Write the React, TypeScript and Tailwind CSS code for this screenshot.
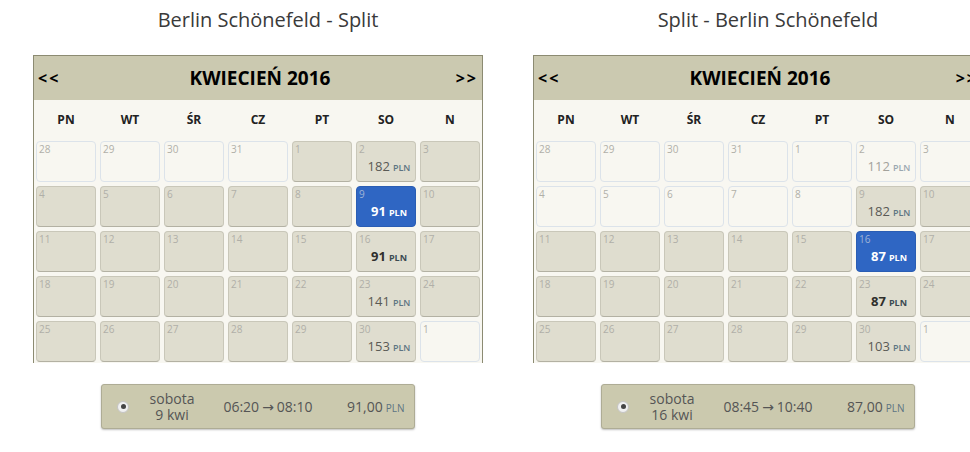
import React from "react";

type Kind = "off" | "day" | "sel";

interface Cell {
  d: number;
  kind: Kind;
  price?: number;
  best?: boolean;
  faded?: boolean;
}

interface Trip {
  title: string;
  cells: Cell[];
  weekday: string;
  date: string;
  from: string;
  to: string;
  amount: string;
}

const WEEKDAYS = ["PN", "WT", "ŚR", "CZ", "PT", "SO", "N"];

// builds a 5-week grid: March tail, April days, May 1st
function month(kinds: (d: number) => Kind, prices: Record<number, Partial<Cell>>): Cell[] {
  const out: Cell[] = [28, 29, 30, 31].map((d) => ({ d, kind: "off" as Kind }));
  for (let d = 1; d <= 30; d++) out.push({ d, kind: kinds(d), ...prices[d] });
  out.push({ d: 1, kind: "off" });
  return out;
}

const TRIPS: Trip[] = [
  {
    title: "Berlin Schönefeld - Split",
    cells: month(
      (d) => (d === 9 ? "sel" : "day"),
      { 2: { price: 182 }, 9: { price: 91, best: true }, 16: { price: 91, best: true }, 23: { price: 141 }, 30: { price: 153 } }
    ),
    weekday: "sobota",
    date: "9 kwi",
    from: "06:20",
    to: "08:10",
    amount: "91,00",
  },
  {
    title: "Split - Berlin Schönefeld",
    cells: month(
      (d) => (d === 16 ? "sel" : d <= 8 ? "off" : "day"),
      { 2: { price: 112, faded: true }, 9: { price: 182 }, 16: { price: 87, best: true }, 23: { price: 87, best: true }, 30: { price: 103 } }
    ),
    weekday: "sobota",
    date: "16 kwi",
    from: "08:45",
    to: "10:40",
    amount: "87,00",
  },
];

function DayCell({ c }: { c: Cell }) {
  const box =
    c.kind === "sel"
      ? "bg-[#2f66c3] border-[#2a5db3]"
      : c.kind === "day"
      ? "bg-[#dfddcf] border-[#c9c7b9] border-b-[#b3b1a3]"
      : "bg-[#f8f7f1] border-[#dce3ea]";
  const num = c.kind === "sel" ? "text-[#9fb3d6]" : "text-[#b0afa8]";
  let priceCls = "text-[#5a5a55] font-normal";
  let plnCls = "text-[#5d7482] font-semibold";
  if (c.faded) {
    priceCls = "text-[#a3a29c] font-normal";
    plnCls = "text-[#9aa7b0] font-semibold";
  }
  if (c.best) {
    priceCls = "text-[#2f2f2c] font-bold";
    plnCls = "text-[#3d4a52] font-bold";
  }
  if (c.kind === "sel") {
    priceCls = "text-white font-bold";
    plnCls = "text-white font-bold";
  }
  return (
    <div className={`h-[41px] rounded-[4px] border ${box} flex flex-col`}>
      <div className={`pl-[2px] pt-[1px] text-[10px] leading-[12px] ${num}`}>{c.d}</div>
      {c.price !== undefined && (
        <div className="text-center pl-[6px] leading-[18px] mt-[1px]">
          <span className={`text-[13px] ${priceCls}`}>{c.price}</span>
          <span className={`text-[9px] ml-[3px] ${plnCls}`}>PLN</span>
        </div>
      )}
    </div>
  );
}

function Calendar({ trip }: { trip: Trip }) {
  return (
    <div className="w-[500px] shrink-0 flex flex-col items-center">
      <div className="pt-[8px] pl-[20px] text-[20px] leading-[24px] text-[#3a3a3a]">{trip.title}</div>

      <div className="mt-[23px] w-[450px] h-[308px] overflow-hidden border border-b-0 border-[#8c8b72] bg-[#f8f7f1]">
        <div className="h-[44px] bg-[#cbc9b0] flex items-center justify-between px-[4px] text-black font-bold">
          <span className="text-[16px] tracking-[2px]">&lt;&lt;</span>
          <span className="text-[19px] pl-[4px]">KWIECIEŃ 2016</span>
          <span className="text-[16px] tracking-[2px]">&gt;&gt;</span>
        </div>
        <div className="grid grid-cols-7 gap-[4px] px-[2px] h-[40px] items-center">
          {WEEKDAYS.map((w) => (
            <div key={w} className="text-center text-[12px] font-bold text-[#222]">
              {w}
            </div>
          ))}
        </div>
        <div className="grid grid-cols-7 gap-[4px] px-[2px] pt-[1px]">
          {trip.cells.map((c, i) => (
            <DayCell key={i} c={c} />
          ))}
        </div>
      </div>

      <div className="mt-[21px] w-[314px] h-[45px] rounded-[3px] border border-[#aeac95] bg-[#cbc9ae] shadow-[0_1px_2px_rgba(0,0,0,0.25)] flex items-center text-[14px] text-[#555]">
        <div className="ml-[15px] w-[12px] h-[12px] rounded-full bg-[#f0f0f0] border border-[#c4c4c4] flex items-center justify-center">
          <div className="w-[5px] h-[5px] rounded-full bg-[#444]" />
        </div>
        <div className="ml-[8px] w-[70px] text-center leading-[16px]">
          <div>{trip.weekday}</div>
          <div>{trip.date}</div>
        </div>
        <div className="ml-[11px] w-[100px] text-center whitespace-nowrap">
          {trip.from}
          <span className="mx-[3px]" style={{ fontFamily: '"DejaVu Sans", sans-serif' }}>→</span>
          {trip.to}
        </div>
        <div className="ml-[29px] whitespace-nowrap">
          {trip.amount}
          <span className="text-[10px] ml-[3px] text-[#5d7482]">PLN</span>
        </div>
      </div>
    </div>
  );
}

export default function App() {
  return (
    <div className="w-[970px] h-[452px] overflow-hidden bg-white" style={{ fontFamily: '"Open Sans", sans-serif' }}>
      <div className="flex pl-[8px]">
        {TRIPS.map((t) => (
          <Calendar key={t.title} trip={t} />
        ))}
      </div>
    </div>
  );
}
